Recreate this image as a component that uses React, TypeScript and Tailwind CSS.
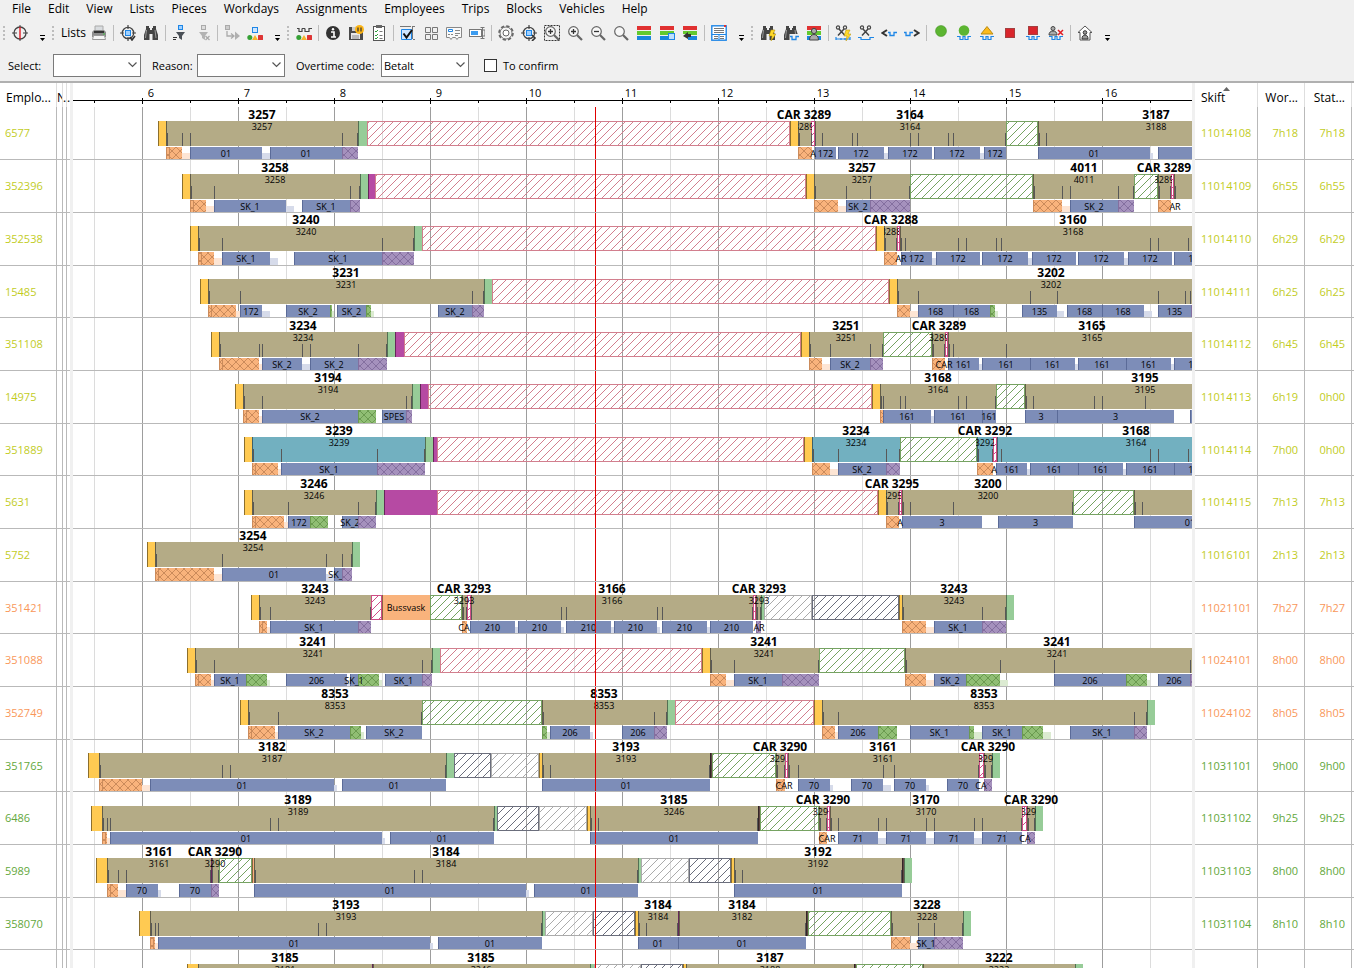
import type { ReactNode } from "react";

type Label = [x: number, title: string, inner: string, clipFrom?: number, clipTo?: number];

type Shift = {
  employee: string;
  skift: string;
  worked: string;
  stat: string;
  tone: "lime" | "orange" | "green";
  bars: string;
  ticks: number[];
  labels: Label[];
  pieces: string;
  notes?: [number, string][];
};

// x values are pixels on the day axis: 96px per hour, 06:00 is at 142
const ORIGIN = 73;
const HOUR = 96;
const SIX = 142;
const NOW = 595;
const HOURS = Array.from({ length: 19 }, (_, i) => i + 5);

const TONES = {
  lime: "text-[#c2cc1e]",
  orange: "text-[#f9975a]",
  green: "text-[#63a83c]",
};

// bars: kind + start, each one runs to the start of the next, "." ends a run
// pieces: kind + start-end[:label]
const SHIFTS: Shift[] = [
  {
    employee: "6577", skift: "11014108", worked: "7h18", stat: "7h18", tone: "lime",
    bars: "y158 k166 g358 R367 y790 k798 P811 k815 G1006 k1038 .2400",
    ticks: [167, 182, 190, 342, 357, 799, 811, 815, 822, 852, 857, 910, 918, 948, 953, 1005, 1039, 1046],
    labels: [[262, "3257", "3257"], [804, "CAR 3289", "3289", 798, 812], [910, "3164", "3164"], [1156, "3187", "3188"]],
    pieces: "O166-182 q182-190 b190-262:01 l262-270 b270-342:01 p342-358 o798-812 b815-836:172 b838-884:172 l884-888 b888-932:172 b934-980:172 l980-984 b984-1006:172 b1038-1150:01 l1150-1153 b1158-1270:01",
    notes: [[813, "A"]],
  },
  {
    employee: "352396", skift: "11014109", worked: "6h55", stat: "6h55", tone: "lime",
    bars: "y182 k190 g360 m368 R375 y806 k814 G910 k1033 G1134 k1158 P1171 k1174 .2400",
    ticks: [191, 214, 350, 359, 815, 846, 870, 909, 1034, 1062, 1070, 1118, 1133, 1159, 1170, 1175],
    labels: [[275, "3258", "3258"], [862, "3257", "3257"], [1084, "4011", "4011"], [1164, "CAR 3289", "3289", 1155, 1172]],
    pieces: "O190-206 q206-214 b214-286:SK_1 l286-294 b302-350:SK_1 p350-360 o814-838 q838-846 b846-870:SK_2 p870-910 o1033-1062 q1062-1070 b1070-1118:SK_2 p1118-1134 o1158-1171",
    notes: [[1175, "AR"]],
  },
  {
    employee: "352538", skift: "11014110", worked: "6h29", stat: "6h29", tone: "lime",
    bars: "y190 k198 g414 R422 y876 k884 P897 k900 .2400",
    ticks: [199, 222, 382, 413, 885, 896, 901, 905, 958, 966, 996, 1001, 1150, 1158, 1188],
    labels: [[306, "3240", "3240"], [891, "CAR 3288", "3288", 884, 899], [1073, "3160", "3168"]],
    pieces: "O198-214 q214-222 b222-270:SK_1 l270-278 b294-382:SK_1 p382-414 o884-897 b901-932:172 l932-936 b936-980:172 b982-1028:172 l1028-1032 b1032-1076:172 b1078-1124:172 l1124-1128 b1128-1172:172 b1174-1218:172",
    notes: [[901, "AR"]],
  },
  {
    employee: "15485", skift: "11014111", worked: "6h25", stat: "6h25", tone: "lime",
    bars: "y200 k208 g484 R492 y889 k897 .2400",
    ticks: [209, 240, 472, 483, 898, 918, 1030, 1057, 1158, 1185, 1190],
    labels: [[346, "3231", "3231"], [1051, "3202", "3202"]],
    pieces: "O208-236 q236-240 b240-262:172 l262-270 b286-330:SK_2 e330-332 v332-334 b337-366:SK_2 e366-371 v371-374 b438-472:SK_2 p472-484 o897-910 q910-918 b918-953:168 b953-990:168 e990-995 v995-998 b1022-1057:135 l1057-1064 b1067-1102:168 b1102-1144:168 l1144-1152 b1158-1191:135 p1191-1210",
  },
  {
    employee: "351108", skift: "11014112", worked: "6h45", stat: "6h45", tone: "lime",
    bars: "y211 k219 g387 m395 R404 y801 k809 G883 k932 P945 k948 .2400",
    ticks: [220, 259, 262, 302, 310, 358, 386, 810, 830, 870, 882, 933, 944, 949, 953, 1006],
    labels: [[303, "3234", "3234"], [846, "3251", "3251"], [939, "CAR 3289", "3289", 929, 947], [1092, "3165", "3165"]],
    pieces: "O219-259 q259-262 b262-302:SK_2 l302-310 b310-358:SK_2 p358-387 o809-822 q822-830 b830-870:SK_2 p870-883 o932-945 b948-979:161 l979-982 b982-1030:161 b1030-1075:161 l1075-1078 b1078-1126:161 b1126-1171:161 l1171-1174 b1174-1218:161",
    notes: [[944, "CAR"]],
  },
  {
    employee: "14975", skift: "11014113", worked: "6h19", stat: "0h00", tone: "lime",
    bars: "y235 k243 g412 m420 R428 y872 k880 G996 k1025 .2400",
    ticks: [244, 262, 406, 411, 881, 883, 900, 905, 958, 966, 995, 1026, 1033, 1094, 1102, 1145],
    labels: [[328, "3194", "3194"], [938, "3168", "3164"], [1145, "3195", "3195"]],
    pieces: "O243-259 q259-262 b262-358:SK_2 e358-376 b382-406:SPES p406-412 o880-883 b883-931:161 l931-934 b934-982:161 b982-996:161 b1025-1057:3 b1057-1174:3 b1190-1290:3",
  },
  {
    employee: "351889", skift: "11014114", worked: "7h00", stat: "0h00", tone: "lime",
    bars: "y244 t252 g425 m433 R437 y804 t812 G900 t977 P993 t997 .2400",
    ticks: [253, 281, 377, 424, 813, 838, 886, 899, 978, 992, 997, 1001, 1150, 1158, 1188],
    labels: [[339, "3239", "3239"], [856, "3234", "3234"], [985, "CAR 3292", "3292", 976, 994], [1136, "3168", "3164"]],
    pieces: "O252-278 q278-281 b281-377:SK_1 p377-425 o812-830 q830-838 b838-886:SK_2 p886-900 o977-993 b996-1027:161 l1027-1030 b1030-1078:161 b1078-1123:161 l1123-1126 b1126-1174:161 b1174-1218:161",
    notes: [[994, "A"]],
  },
  {
    employee: "5631", skift: "11014115", worked: "7h13", stat: "7h13", tone: "lime",
    bars: "y244 k252 g376 m384 R437 y878 k886 P899 k902 G1073 k1134 .2400",
    ticks: [253, 288, 358, 375, 887, 898, 903, 910, 953, 1072, 1135, 1142],
    labels: [[314, "3246", "3246"], [892, "CAR 3295", "3295", 886, 901], [988, "3200", "3200"]],
    pieces: "O252-284 q284-288 b288-310:172 e310-328 b342-358:SK_2 p358-376 o886-899 b902-982:3 b998-1073:3 b1134-1246:01",
    notes: [[900, "A"]],
  },
  {
    employee: "5752", skift: "11016101", worked: "2h13", stat: "2h13", tone: "lime",
    bars: "y147 k155 g352 .360",
    ticks: [156, 222, 326, 342, 351],
    labels: [[253, "3254", "3254"]],
    pieces: "O155-214 q214-222 b222-326:01 l326-334 b334-342:SK_1 p342-352",
  },
  {
    employee: "351421", skift: "11021101", worked: "7h27", stat: "7h27", tone: "orange",
    bars: "y251 k259 P371 w382 G430 k462 P467 k471 P753 k756 g761 L764 B812 y899 k902 g1006 .1014",
    ticks: [260, 270, 370, 463, 466, 471, 561, 566, 657, 662, 752, 757, 760, 903, 982, 1005],
    labels: [[315, "3243", "3243"], [464, "CAR 3293", "3293"], [612, "3166", "3166"], [759, "CAR 3293", "3293"], [954, "3243", "3243"]],
    pieces: "O259-267 q267-270 b270-358:SK_1 p358-371 o462-467 b470-515:210 l515-518 b518-561:210 l561-564 b566-611:210 l611-614 b614-657:210 l657-660 b662-707:210 l707-710 b710-753:210 p756-761 o902-926 q926-934 b934-982:SK_1 p982-1006",
    notes: [[464, "CA"], [759, "AR"]],
  },
  {
    employee: "351088", skift: "11024101", worked: "8h00", stat: "8h00", tone: "orange",
    bars: "y187 k195 g432 R440 y702 k710 G819 k905 .2400",
    ticks: [196, 214, 422, 431, 711, 734, 818, 906, 1000, 1054, 1190],
    labels: [[313, "3241", "3241"], [764, "3241", "3241"], [1057, "3241", "3241"]],
    pieces: "O195-211 q211-214 b214-246:SK_1 e246-267 v267-270 b286-347:206 l347-350 b350-358 e358-379 v379-382 b385-422:SK_1 p422-432 o710-726 q726-734 b734-782:SK_1 p782-819 o905-926 q926-934 b934-966:SK_2 e966-1000 v1000-1008 b1054-1126:206 e1126-1147 v1147-1150 b1158-1190:206 p1190-1210",
    notes: [[354, "SK_1"]],
  },
  {
    employee: "352749", skift: "11024102", worked: "8h05", stat: "8h05", tone: "orange",
    bars: "y240 k248 G422 k542 g667 R675 y814 k822 g1147 .1155",
    ticks: [249, 278, 421, 543, 654, 666, 823, 838, 1134, 1146],
    labels: [[335, "8353", "8353"], [604, "8353", "8353"], [984, "8353", "8353"]],
    pieces: "O248-275 q275-278 b278-350:SK_2 e350-361 v361-364 b366-422:SK_2 e542-547 v547-550 b550-590:206 l590-593 b622-654:206 p654-667 o822-835 q835-838 b838-878:206 e878-897 b910-969:SK_1 e969-974 v974-982 b982-1022:SK_1 e1022-1043 v1043-1051 b1070-1134:SK_1 p1134-1147",
  },
  {
    employee: "351765", skift: "11031101", worked: "9h00", stat: "9h00", tone: "green",
    bars: "y88 k99 g446 B454 L491 y539 k542 n710 G712 k776 P785 k788 P979 k984 g992 .1000",
    ticks: [100, 222, 230, 445, 543, 550, 709, 777, 784, 789, 798, 883, 894, 978, 985, 991],
    labels: [[272, "3182", "3187"], [626, "3193", "3193"], [780, "CAR 3290", "3290", 768, 785], [883, "3161", "3161"], [988, "CAR 3290", "3290", 979, 993]],
    pieces: "O99-142 q142-150 b150-334:01 l334-337 b342-446:01 b542-710:01 o776-785 b798-830:70 l830-833 b851-883:70 l883-891 b894-926:70 l926-929 b947-979:70 p984-992",
    notes: [[784, "CAR"], [981, "CA"]],
  },
  {
    employee: "6486", skift: "11031102", worked: "9h25", stat: "9h25", tone: "green",
    bars: "y91 k102 g494 B497 L539 y587 k590 n758 G760 k819 P827 k830 P1022 k1027 g1035 .1043",
    ticks: [103, 107, 110, 270, 278, 493, 591, 598, 757, 820, 826, 831, 838, 878, 886, 926, 934, 974, 982, 1021, 1028, 1034],
    labels: [[298, "3189", "3189"], [674, "3185", "3246"], [823, "CAR 3290", "3290", 812, 828], [926, "3170", "3170"], [1031, "CAR 3290", "3290", 1022, 1036]],
    pieces: "O102-107 q107-110 b110-382:01 l382-385 b390-494:01 b590-758:01 o819-827 b838-878:71 l878-886 b886-926:71 l926-934 b934-974:71 l974-982 b982-1022:71 p1027-1035",
    notes: [[827, "CAR"], [1025, "CA"]],
  },
  {
    employee: "5989", skift: "11031103", worked: "8h00", stat: "8h00", tone: "green",
    bars: "y96 k107 m211 k212 G219 w252 k254 g638 L641 B689 y731 k734 n902 g904 .912",
    ticks: [108, 118, 126, 210, 212, 218, 255, 414, 422, 637, 735, 742, 901],
    labels: [[159, "3161", "3161"], [215, "CAR 3290", "3290"], [446, "3184", "3184"], [818, "3192", "3192"]],
    pieces: "O107-118 q118-126 b126-158:70 l158-161 b179-211:70 p211-219 b254-526:01 l526-529 b534-638:01 b734-902:01",
  },
  {
    employee: "358070", skift: "11031104", worked: "8h10", stat: "8h10", tone: "green",
    bars: "y139 k150 g542 L545 B593 y635 k638 m678 k679 n806 G808 k891 g963 .971",
    ticks: [151, 155, 158, 318, 326, 541, 639, 646, 677, 805, 892, 918, 934, 962],
    labels: [[346, "3193", "3193"], [658, "3184", "3184"], [742, "3184", "3182"], [927, "3228", "3228"]],
    pieces: "O150-155 q155-158 b158-430:01 l430-433 b438-542:01 b638-678:01 b678-806:01 o891-910 q910-918 b918-934:SK_1 p934-963",
  },
  {
    employee: "", skift: "", worked: "", stat: "", tone: "green",
    bars: "y187 k198 m372 k373 g590 L594 B641 y683 k686 n854 G856 k923 g1075 .1083",
    ticks: [],
    labels: [[285, "3185", "3181"], [481, "3185", "3246"], [770, "3187", "3188"], [999, "3222", "3222"]],
    pieces: "",
  },
];

const SOLID: Record<string, string> = {
  y: "#ffca52",
  k: "#b4ab86",
  t: "#72b0c0",
  g: "#97cc98",
  m: "#b64aa3",
  w: "#f9b37c",
  n: "#5e4545",
};

const HATCH: Record<string, string> = {
  R: "#d27f8e",
  G: "#76a362",
  B: "#6b6e7c",
  L: "#ababab",
  P: "#cf4d86",
};

const PIECE: Record<string, { fill: string; line: string; cross?: boolean; pale?: boolean }> = {
  b: { fill: "#7d8db8", line: "#5b6b98" },
  p: { fill: "#a591bd", line: "#846f9f", cross: true },
  e: { fill: "#90be74", line: "#6b9a50", cross: true },
  o: { fill: "#f9b37c", line: "#cb8b5b", cross: true },
  O: { fill: "#f9b37c", line: "#cb8b5b", cross: true },
  l: { fill: "#d6dbea", line: "", pale: true },
  q: { fill: "#fde5d4", line: "", pale: true },
  v: { fill: "#dcebd2", line: "", pale: true },
};

const rowHeight = (i: number) => (i > 0 && i % 3 === 0 ? 52 : 53);
const rowClass = (i: number) => (i > 0 && i % 3 === 0 ? "h-[52px]" : "h-[53px]");

function parseBars(source: string) {
  const marks = source.split(" ").map((m) => ({ kind: m[0], at: Number(m.slice(1)) }));
  return marks.slice(0, -1).map((m, i) => ({ kind: m.kind, from: m.at, to: marks[i + 1].at }));
}

function parsePieces(source: string) {
  if (!source) return [];
  return source.split(" ").map((p) => {
    const [range, label] = p.slice(1).split(":");
    const [from, to] = range.split("-").map(Number);
    return { kind: p[0], from, to, label };
  });
}

function Patterns() {
  return (
    <svg width="0" height="0" className="absolute" aria-hidden="true">
      <defs>
        {Object.entries(HATCH).map(([kind, color]) => (
          <pattern key={kind} id={`hatch-${kind}`} width="8" height="8" patternUnits="userSpaceOnUse">
            <path d="M0 8L8 0" stroke={color} strokeWidth="1" shapeRendering="crispEdges" />
          </pattern>
        ))}
        {["p", "e", "o", "O"].map((kind) => (
          <pattern key={kind} id={`cross-${kind}`} width="8" height="8" patternUnits="userSpaceOnUse">
            <path d="M0 8L8 0M0 0l8 8" stroke={PIECE[kind].line} strokeWidth="1" shapeRendering="crispEdges" />
          </pattern>
        ))}
      </defs>
    </svg>
  );
}

function ChartRow({ shift, index }: { shift: Shift; index: number }) {
  const height = rowHeight(index) - 1;
  const top = height - (index % 3 === 2 ? 39 : 38);
  const below = top + 26;

  return (
    <div className={`border-b border-[#b9b9b9] ${rowClass(index)}`}>
      <svg className="block w-full" height={height} shapeRendering="crispEdges">
        <g transform={`translate(${-ORIGIN} 0)`}>
          {HOURS.map((h) => (
            <g key={h}>
              {h > 5 && <rect x={SIX + (h - 6) * HOUR} y="0" width="1" height={height} fill="#9d9d9d" />}
              <rect x={SIX + (h - 6) * HOUR + 48} y="0" width="1" height={height} fill="#dcdcdc" />
            </g>
          ))}
          {parseBars(shift.bars).map(({ kind, from, to }) =>
            kind === "." ? null : HATCH[kind] ? (
              <g key={from}>
                {kind === "P" && <rect x={from} y={top} width={to - from} height="25" fill="#fff" />}
                <rect
                  x={from + 0.5}
                  y={top + 0.5}
                  width={to - from - 1}
                  height="24"
                  fill={`url(#hatch-${kind})`}
                  stroke={HATCH[kind]}
                />
              </g>
            ) : (
              <g key={from}>
                <rect x={from} y={top} width={to - from} height="25" fill={SOLID[kind]} />
                <rect x={from} y={top} width="1" height="25" fill="#000" fillOpacity="0.45" />
              </g>
            )
          )}
          {shift.ticks.map((x) => (
            <rect key={x} x={x} y={top + 12} width="1" height="13" fill="#585858" />
          ))}
          {parsePieces(shift.pieces).map(({ kind, from, to, label }) => {
            const { fill, line, cross, pale } = PIECE[kind];
            if (pale) return <rect key={from} x={from} y={below + 6} width={to - from} height={height - below - 6} fill={fill} />;
            return (
              <g key={from}>
                <rect x={from} y={below} width={to - from} height={height - below} fill={fill} />
                {cross && <rect x={from} y={below} width={to - from} height={height - below} fill={`url(#cross-${kind})`} />}
                <rect x={from} y={below} width="1" height={height - below} fill={line} />
                {kind === "O" && <rect x={from + 3} y={below} width="1" height={height - below} fill={line} />}
                {label && (
                  <text x={(from + to) / 2} y={below + 10} textAnchor="middle" className="text-[9px]">
                    {label}
                  </text>
                )}
              </g>
            );
          })}
          {shift.notes?.map(([x, text]) => (
            <text key={x} x={x} y={below + 10} textAnchor="middle" className="text-[9px]">
              {text}
            </text>
          ))}
          {shift.labels.map(([x, title, inner, clipFrom, clipTo]) => (
            <g key={x}>
              <text x={x} y={top - 2} textAnchor="middle" className="text-[12px] font-bold">
                {title}
              </text>
              {clipFrom && clipTo ? (
                <svg x={clipFrom} y={top} width={clipTo - clipFrom} height="12" overflow="hidden">
                  <text x={x - clipFrom} y="9" textAnchor="middle" className="text-[9px]">
                    {inner}
                  </text>
                </svg>
              ) : (
                <text x={x} y={top + 9} textAnchor="middle" className="text-[9px]">
                  {inner}
                </text>
              )}
            </g>
          ))}
          {shift.employee === "351421" && (
            <text x="406" y={top + 16} textAnchor="middle" className="text-[9px]">
              Bussvask
            </text>
          )}
          <rect x={NOW} y="0" width="1" height={height} fill="#e00000" />
        </g>
      </svg>
    </div>
  );
}

function TimeAxis() {
  return (
    <svg className="block h-6 w-full" shapeRendering="crispEdges">
      <rect x="0" y="17" width="100%" height="1" fill="#000" />
      <g transform={`translate(${-ORIGIN} 0)`}>
        {HOURS.map((h) => (
          <g key={h}>
            {h > 5 && (
              <>
                <rect x={SIX + (h - 6) * HOUR} y="15" width="1" height="6" />
                <text x={SIX + (h - 6) * HOUR + 9} y="14" textAnchor="middle" className="text-[11px]">
                  {h}
                </text>
              </>
            )}
            <rect x={SIX + (h - 6) * HOUR + 48} y="17" width="1" height="3" />
          </g>
        ))}
      </g>
    </svg>
  );
}

/* ---------- toolbar icons ---------- */

const Crosshair = () => (
  <>
    <circle cx="8" cy="8" r="6" fill="none" stroke="#444" strokeWidth="1.3" />
    <path d="M0 8h5M11 8h5M8 0v3M8 13v3" stroke="#444" />
    <path d="M8 2v12" stroke="#e01b24" strokeWidth="1.4" />
  </>
);

const Target = ({ corner }: { corner: string }) => (
  <>
    <circle cx="8" cy="8" r="5.7" fill="none" stroke="#444" strokeWidth="1.3" />
    <path d="M0 8h4M12 8h4M8 0v4M8 12v4" stroke="#444" strokeWidth="1.2" />
    <rect x="5.5" y="5.5" width="5" height="5" fill="#9fd0ff" stroke="#1e86e6" />
    <path d={corner} fill="none" stroke="#333" strokeWidth="1.6" />
  </>
);

const Binoculars = () => (
  <>
    <path d="M3 1h3v2h1v2h2V3h1V1h3v3l2 6v5H9.5V9h-3v6H1v-5l2-6z" fill="#444" />
    <path d="M3.5 5L2.5 13M12 5l1 8" stroke="#999" />
  </>
);

const Printer = () => (
  <>
    <path d="M4 1h8v6H4z" fill="#d9dcdf" stroke="#aaa" />
    <path d="M1 7l2-2h10l2 2v5H1z" fill="#8d8d8d" />
    <path d="M3 6h10v2H3z" fill="#333" />
    <path d="M2.5 10.5h11l1 4h-13z" fill="#f5f5f5" stroke="#999" />
    <path d="M12 9h2" stroke="#44c244" />
  </>
);

const Funnel = ({ off }: { off?: boolean }) => (
  <>
    <rect x="6.5" y="0.5" width="4" height="4" fill={off ? "#ddd" : "#9fd0ff"} stroke={off ? "#aaa" : "#1e86e6"} />
    <path d="M4 7h9l-3 4v4l-3-2v-2z" fill={off ? "#b3b3b3" : "#4a5057"} />
    {off ? (
      <path d="M10.5 11l4 4M14.5 11l-4 4" stroke="#aaa" strokeWidth="1.3" />
    ) : (
      <path d="M1 12.500h4M1 14.500h3" stroke="#333" />
    )}
  </>
);

const Flow = () => (
  <>
    <rect x="1.5" y="0.5" width="4" height="4" fill="#ccc" stroke="#aaa" />
    <path d="M3 6v5h6M7 8.500l3 2.500-3 2.500" fill="none" stroke="#aaa" strokeWidth="1.3" />
    <path d="M11 6.5l5 4.500-5 4z" fill="#b0b0b0" />
  </>
);

const Shapes = ({ children }: { children?: ReactNode }) => (
  <>
    {children}
    <circle cx="2.8" cy="12.5" r="2.5" fill="#35a135" />
    <path d="M8 10l3 5H5z" fill="#f5b52c" />
    <rect x="11" y="10" width="5" height="5" rx="0.5" fill="#de3535" />
  </>
);

const Info = () => (
  <>
    <circle cx="8" cy="8" r="7" fill="#333" />
    <path d="M6 7h3v5M6 12h5" fill="none" stroke="#fff" strokeWidth="1.6" />
    <circle cx="8" cy="4.3" r="1.2" fill="#fff" />
  </>
);

const Save = () => (
  <>
    <path d="M1 2h12l2 2v11H1z" fill="#4a4a4a" />
    <path d="M3 8h9v6H3z" fill="#e8e8e8" />
    <path d="M4 2h5v4H4z" fill="#ccc" />
    <path d="M4 11h7M4 13h7" stroke="#888" />
    <circle cx="11.5" cy="4.5" r="4.5" fill="#fdb515" />
    <path d="M10 2.5v4M13 2.5v4" stroke="#333" strokeWidth="1.2" />
  </>
);

const Clipboard = () => (
  <>
    <rect x="2.5" y="1.5" width="11" height="14" fill="#fff" stroke="#555" />
    <path d="M5 0h6v3H5z" fill="#666" />
    <path d="M4 6l1 1 2-2M4 10l1 1 2-2M4 13l1 1 2-2" fill="none" stroke="#2a9d3a" />
    <path d="M8.5 6.5h3M8.5 10.5h3M8.5 13.5h3" stroke="#777" />
  </>
);

const Checked = () => (
  <>
    <path d="M1.5 4.5h10v10h-10z" fill="#cfe6ff" stroke="#1e86e6" />
    <path d="M0 1.500h11M12.500 1v13M15 1.500h-2M15 14.500h-2" stroke="#777" />
    <path d="M3.5 8.500l3 4L12 5" fill="none" stroke="#111" strokeWidth="2" />
  </>
);

const Tiles = () => (
  <path d="M2.5 2.5h5v5h-5zM9.5 2.5h5v5h-5zM2.5 9.5h5v5h-5zM9.5 9.5h5v5h-5z" fill="none" stroke="#777" />
);

const Form = () => (
  <>
    <path d="M0.5 2.5h15v10h-3l-1.500 2-1.500-2h-3l-1.500 2-1.500-2h-3z" fill="#fafafa" stroke="#888" />
    <path d="M2.5 4.5h4v2h-4z" fill="#fff" stroke="#1e86e6" />
    <path d="M9 5.5h5M9 8.5h5M9 10.5h3M2 9.5h2M5 9.5h2" stroke="#888" />
  </>
);

const Field = () => (
  <>
    <rect x="0.5" y="4.5" width="12" height="7" fill="#fff" stroke="#777" />
    <path d="M2 6h7v4H2z" fill="#3c9cf0" />
    <path d="M13.5 3v10M11.5 2.5h4M11.5 13.5h4M14 5h2v6h-2" fill="none" stroke="#777" />
  </>
);

const Gear = () => (
  <>
    <circle cx="8" cy="8" r="6.6" fill="none" stroke="#666" strokeWidth="2.4" strokeDasharray="3.2 1.984" />
    <circle cx="8" cy="8" r="6" fill="#f4f4f4" stroke="#777" />
    <circle cx="8" cy="8" r="3" fill="#fff" stroke="#666" />
  </>
);

const Lens = ({ sign, boxed }: { sign?: string; boxed?: boolean }) => (
  <>
    {boxed && <rect x="0.5" y="0.5" width="15" height="15" fill="none" stroke="#333" strokeDasharray="2 1" />}
    <path d="M10 10l5 5" stroke="#666" strokeWidth="2.2" />
    <circle cx="6.5" cy="6.5" r="4.8" fill="#f7f7f7" stroke="#666" strokeWidth="1.2" />
    {sign && <path d={sign} stroke="#333" strokeWidth="1.3" />}
  </>
);

const Stripes = ({ children }: { children?: ReactNode }) => (
  <>
    <path d="M1 1h14v4H1z" fill="#e03131" />
    <path d="M1 6h14v4H1z" fill="#62c92f" />
    <path d="M1 11h14v4H1z" fill="#1a86dc" />
    {children}
  </>
);

const Sheet = () => (
  <>
    <rect x="0.8" y="0.8" width="14.4" height="14.4" fill="#fff" stroke="#1e86e6" strokeWidth="1.4" />
    <path d="M3 3.5h10M3 5.5h10M3 7.5h10M3 11.5h4M3 13.5h4M9 11.5h4M9 13.5h4" stroke="#777" />
    <path d="M1 9.5h14M8 10v5" stroke="#1e86e6" />
    <path d="M13 0h2v2h-2z" fill="#e03131" />
  </>
);

const Bolt = () => <path d="M11 5h4l-2 4h3l-5 7 1-5H9z" fill="#ffd92b" stroke="#b08d00" strokeWidth="0.5" />;

const Person = () => (
  <>
    <circle cx="8" cy="6" r="2.6" fill="#aaa" stroke="#444" />
    <path d="M3.5 15c0-3.500 2-5.500 4.500-5.500s4.500 2 4.500 5.500z" fill="#aaa" stroke="#444" />
  </>
);

const Scissors = () => (
  <>
    <circle cx="3" cy="2.5" r="1.6" fill="none" stroke="#444" strokeWidth="1.2" />
    <circle cx="10" cy="2.5" r="1.6" fill="none" stroke="#444" strokeWidth="1.2" />
    <path d="M4 4l6 6.500M9 4l-6 6.500" stroke="#444" strokeWidth="1.5" />
  </>
);

const Track = () => <path d="M1 11.5h3v3h3v-3h2v3h3v-3h3" fill="none" stroke="#1e86e6" strokeWidth="1.2" />;

const ICONS: Record<string, ReactNode> = {
  "Centre line": <Crosshair />,
  Print: <Printer />,
  "Locate list": <Target corner="M10 12l2 3 3-4" />,
  Find: <Binoculars />,
  Filter: <Funnel />,
  "Clear filter": <Funnel off />,
  "Follow link": <Flow />,
  "Show status": (
    <Shapes>
      <rect x="5.5" y="2.5" width="5" height="5" fill="#cfe6ff" stroke="#1e86e6" />
    </Shapes>
  ),
  "Piece status": (
    <Shapes>
      <path d="M1 3.5h2v3h3v-3M9 3.5v3h4v-3h3M6 3.5h3" fill="none" stroke="#444" strokeWidth="1.2" />
    </Shapes>
  ),
  Information: <Info />,
  "Save and hold": <Save />,
  Checklist: <Clipboard />,
  "Select columns": <Checked />,
  Tiles: <Tiles />,
  Form: <Form />,
  "Text field": <Field />,
  Settings: <Gear />,
  Locate: <Target corner="M11 10l3 3-3 3" />,
  "Zoom area": <Lens boxed sign="M4 6.5h5M6.5 4v5" />,
  "Zoom in": <Lens sign="M4 6.5h5M6.5 4v5" />,
  "Zoom out": <Lens sign="M4 6.5h5" />,
  "Reset zoom": <Lens />,
  Colours: <Stripes />,
  "Colour pieces": (
    <Stripes>
      <rect x="9.5" y="8.5" width="6" height="6" fill="#bfe0ff" stroke="#1e86e6" />
    </Stripes>
  ),
  "Undo colours": (
    <Stripes>
      <path d="M0 9h6v7H0z" fill="#f0f0f0" />
      <path d="M6 7l-5 4 5 3v-2h3V9H6z" fill="#333" />
    </Stripes>
  ),
  Report: <Sheet />,
  "Quick search": (
    <>
      <Binoculars />
      <Bolt />
    </>
  ),
  "Search pieces": (
    <>
      <Binoculars />
      <path d="M8 9h8v7H8z" fill="#f0f0f0" />
      <path d="M7 11.5h2v3h4v-3h3" fill="none" stroke="#1e86e6" strokeWidth="1.3" />
    </>
  ),
  "Colour employees": (
    <Stripes>
      <Person />
    </Stripes>
  ),
  "Quick cut": (
    <>
      <Scissors />
      <path d="M1 12v3M1 14h14M6 13v2M10 13v2M15 12v3" stroke="#1e86e6" strokeWidth="1.2" />
      <Bolt />
    </>
  ),
  Cut: (
    <>
      <g transform="translate(1 0)">
        <Scissors />
      </g>
      <path d="M0 12.5h3v2h9v-2h4" fill="none" stroke="#1e86e6" strokeWidth="1.2" />
    </>
  ),
  "Move back": (
    <>
      <path d="M6 5L1.5 8 6 11" fill="none" stroke="#333" strokeWidth="2" />
      <path d="M7 7.5h2v3h4v-3h3" fill="none" stroke="#1e86e6" strokeWidth="1.3" />
    </>
  ),
  "Move forward": (
    <>
      <path d="M10 5l4.500 3-4.500 3" fill="none" stroke="#333" strokeWidth="2" />
      <path d="M0 7.5h2v3h4v-3h3" fill="none" stroke="#1e86e6" strokeWidth="1.3" />
    </>
  ),
  Available: <circle cx="8" cy="6" r="5.5" fill="#5cb531" stroke="#3f8a20" strokeWidth="0.5" />,
  "Available piece": (
    <>
      <circle cx="8" cy="5.5" r="5.3" fill="#5cb531" />
      <Track />
    </>
  ),
  Warning: (
    <>
      <path d="M8 1.5l6 7.500H2z" fill="#fdbb1c" stroke="#b98a10" />
      <Track />
    </>
  ),
  Stop: <rect x="3.5" y="3.5" width="9" height="9" fill="#d9252c" stroke="#a34040" />,
  "Stop piece": (
    <>
      <rect x="3.5" y="1.5" width="9" height="8" fill="#d9252c" stroke="#a34040" />
      <Track />
    </>
  ),
  "Remove employee": (
    <>
      <circle cx="5" cy="3.5" r="2" fill="#aaa" stroke="#444" />
      <path d="M1 10c0-2.500 1.500-4 4-4s4 1.500 4 4z" fill="#aaa" stroke="#444" />
      <path d="M10 5l5 5M15 5l-5 5" stroke="#e01b24" strokeWidth="1.5" />
      <Track />
    </>
  ),
  Home: (
    <>
      <path d="M8 1l7 6.500h-2V15H3V7.500H1z" fill="#fff" stroke="#555" />
      <circle cx="8" cy="7.5" r="1.8" fill="#999" stroke="#333" />
      <path d="M5 14c0-2.500 1-4 3-4s3 1.500 3 4z" fill="#999" stroke="#333" />
    </>
  ),
};

// "|" separator, ":" grip, "v" overflow menu
const TOOLBAR = [
  ":", "Centre line", "v", ":", "Lists", "Print", "|", "Locate list", "Find", "|", "Filter", "Clear filter", "|",
  "Follow link", "Show status", "v", ":", "Piece status", "|", "Information", "Save and hold", "Checklist", "|",
  "Select columns", "Tiles", "Form", "Text field", "|", "Settings", "Locate", "Zoom area", "Zoom in", "Zoom out",
  "Reset zoom", "Colours", "Colour pieces", "Undo colours", "|", "Report", "v", ":", "Quick search",
  "Search pieces", "Colour employees", "|", "Quick cut", "Cut", "Move back", "Move forward", "|", "Available",
  "Available piece", "Warning", "Stop", "Stop piece", "Remove employee", "|", "Home", "v",
];

const MENU = [
  "File", "Edit", "View", "Lists", "Pieces", "Workdays", "Assignments", "Employees", "Trips", "Blocks", "Vehicles", "Help",
];

function ToolbarItem({ name }: { name: string }) {
  if (name === "|")
    return (
      <div className="flex w-1.5 shrink-0 justify-center">
        <div className="h-4 w-px bg-[#bdbdbd]" />
      </div>
    );
  if (name === ":")
    return (
      <div className="flex w-2 shrink-0 flex-col items-center gap-0.5">
        {[0, 1, 2, 3].map((n) => (
          <div key={n} className="size-0.5 bg-[#bdbdbd]" />
        ))}
      </div>
    );
  if (name === "v")
    return (
      <button type="button" aria-label="More" className="flex h-4 w-[18px] shrink-0 items-end justify-end pr-1">
        <svg width="5" height="6" viewBox="0 0 5 6">
          <path d="M0 0h5v1H0zM0 3h5L2.5 6z" fill="#000" />
        </svg>
      </button>
    );
  if (name === "Lists")
    return (
      <button type="button" className="w-[30px] shrink-0 pl-1 text-left">
        Lists
      </button>
    );
  return (
    <button type="button" aria-label={name} className="flex w-[23px] shrink-0 justify-center">
      <svg width="16" height="16" viewBox="0 0 16 16">
        {ICONS[name]}
      </svg>
    </button>
  );
}

function Picker({ id, label, width, options }: { id: string; label: string; width: string; options: string[] }) {
  return (
    <div className="flex items-center">
      <label htmlFor={id} className={`shrink-0 whitespace-nowrap ${width}`}>
        {label}
      </label>
      <div className="relative">
        <select
          id={id}
          className="block h-[23px] w-[88px] appearance-none border border-[#7a7a7a] bg-white pl-0.5 leading-4 outline-none"
        >
          {options.map((o) => (
            <option key={o}>{o}</option>
          ))}
        </select>
        <svg className="pointer-events-none absolute top-2 right-1" width="9" height="6" viewBox="0 0 9 6">
          <path d="M0.5 0.5l4 4 4-4" fill="none" stroke="#555" strokeWidth="1.2" />
        </svg>
      </div>
    </div>
  );
}

const TH = "h-6 overflow-hidden whitespace-nowrap border-[#dedede] p-0 pt-1.5 font-normal";
const TD = "border-b border-[#b9b9b9] p-0 align-middle";

export default function App() {
  return (
    <div className="flex h-screen flex-col overflow-hidden bg-[#f0f0f0] font-['Open_Sans','Noto_Sans',sans-serif] text-[12px] leading-4 text-black">
      <Patterns />
      <nav className="flex h-[18px] shrink-0 items-center gap-[17px] pl-3">
        {MENU.map((m) => (
          <button type="button" key={m}>
            {m}
          </button>
        ))}
      </nav>
      <div className="flex h-[30px] shrink-0 items-center" role="toolbar">
        {TOOLBAR.map((name, i) => (
          <ToolbarItem key={i} name={name} />
        ))}
      </div>
      <div className="flex h-[33px] shrink-0 items-center gap-[11px] pt-0.5 pl-2 text-[11px]">
        <Picker id="select" label="Select:" width="w-[45px]" options={[""]} />
        <Picker id="reason" label="Reason:" width="w-[45px]" options={[""]} />
        <Picker id="overtime" label="Overtime code:" width="w-[85px]" options={["Betalt"]} />
        <label className="flex items-center gap-1.5 pl-1">
          <input type="checkbox" className="size-[13px] appearance-none border border-[#333] bg-white" />
          To confirm
        </label>
      </div>

      <main className="flex min-h-0 flex-1 overflow-hidden border-t-2 border-[#b0b0b0] bg-white">
        <table className="w-[70px] shrink-0 table-fixed border-separate border-spacing-0 self-start">
          <thead>
            <tr>
              <th className={`${TH} w-[57px] border-r pl-1.5 text-left`}>Emplo...</th>
              <th className={`${TH} w-1.5 border-r`}>N</th>
              <th className={`${TH} w-1 border-r`}>.</th>
              <th className={`${TH} w-[3px]`}>.</th>
            </tr>
          </thead>
          <tbody>
            {SHIFTS.map((s, i) => (
              <tr key={i} className={TONES[s.tone]}>
                <td className={`${TD} ${rowClass(i)} border-r pl-[5px] text-[11px]`}>{s.employee}</td>
                <td className={`${TD} border-r`} />
                <td className={`${TD} border-r`} />
                <td className={TD} />
              </tr>
            ))}
          </tbody>
        </table>
        <div className="w-[3px] shrink-0 bg-[#f0f0f0]" />
        <section className="min-w-0 flex-1 overflow-hidden">
          <TimeAxis />
          {SHIFTS.map((s, i) => (
            <ChartRow key={i} shift={s} index={i} />
          ))}
        </section>
        <div className="w-[3px] shrink-0 bg-[#f0f0f0]" />
        <table className="w-[159px] shrink-0 table-fixed border-separate border-spacing-0 self-start">
          <thead>
            <tr>
              <th className={`${TH} relative w-[63px] border-r pl-1.5 text-left`}>
                Skift
                <svg className="absolute top-1 left-7" width="7" height="4" viewBox="0 0 7 4">
                  <path d="M0 4L3.5 0 7 4z" fill="#666" />
                </svg>
              </th>
              <th className={`${TH} w-[47px] border-r pr-1.5 text-right`}>Wor...</th>
              <th className={`${TH} w-[47px] border-r pr-1.5 text-right`}>Stat...</th>
              <th className={`${TH} w-0.5`} />
            </tr>
          </thead>
          <tbody>
            {SHIFTS.map((s, i) => (
              <tr key={i} className={`text-[11px] ${TONES[s.tone]}`}>
                <td className={`${TD} ${rowClass(i)} border-r pl-1.5`}>{s.skift}</td>
                <td className={`${TD} border-r pr-1.5 text-right`}>{s.worked}</td>
                <td className={`${TD} border-r pr-1.5 text-right`}>{s.stat}</td>
                <td className={TD} />
              </tr>
            ))}
          </tbody>
        </table>
      </main>
    </div>
  );
}
